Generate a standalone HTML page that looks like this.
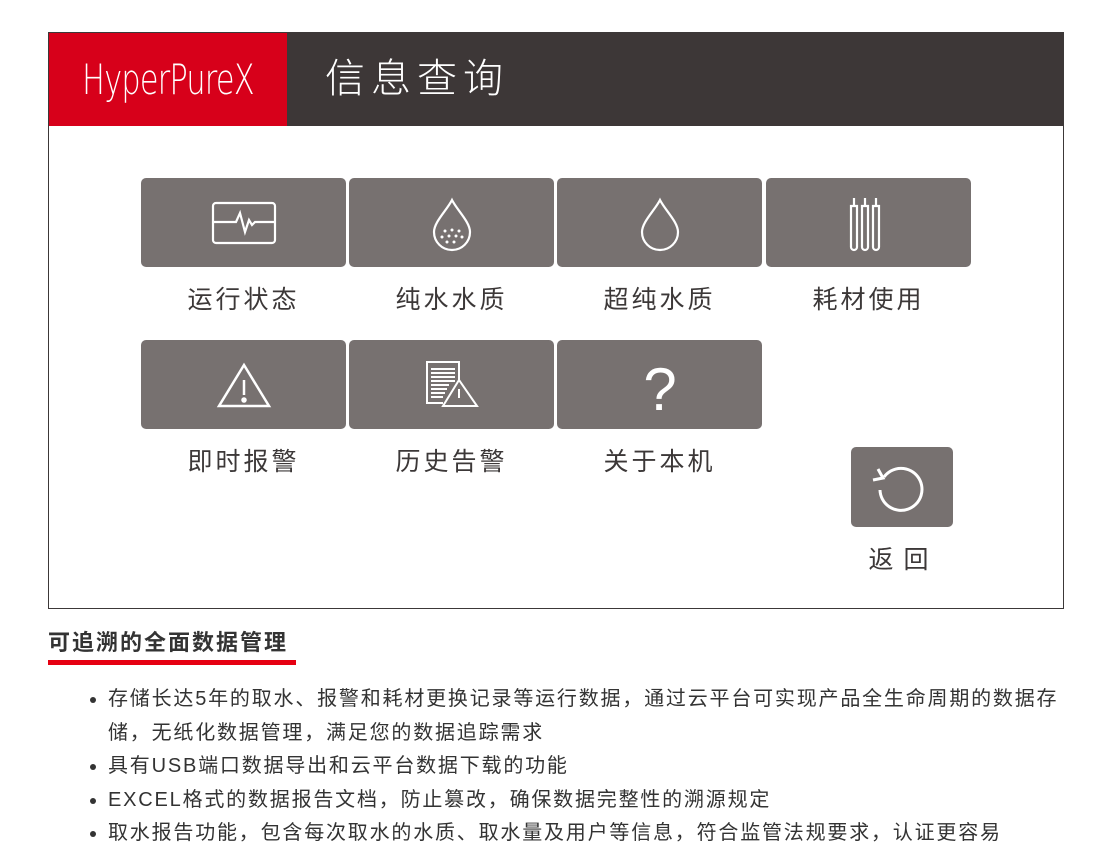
<!DOCTYPE html><html><head><meta charset="utf-8"><style>
body{margin:0;width:1111px;height:862px;background:#fff;font-family:"Liberation Sans","Noto Sans CJK SC",sans-serif;position:relative;overflow:hidden}
.frame{position:absolute;left:48px;top:32px;width:1014px;height:575px;border:1px solid #3c3838}
.hdr{position:absolute;left:0;top:0;width:1014px;height:93px;background:#3d3737}
.red{position:absolute;left:0;top:0;width:238px;height:93px;background:#d7001a;overflow:hidden}
.red span{position:absolute;left:119px;top:0;line-height:93px;color:#fff;font-size:42px;letter-spacing:-1px;transform:translateX(-50%) scaleX(.72);white-space:nowrap;font-family:"DejaVu Sans",sans-serif;font-weight:200}
.title{position:absolute;left:276px;top:0;line-height:93px;color:#fff;font-size:40px;letter-spacing:6px;font-weight:300}
.t{position:absolute;width:205px;height:89px;background:#777170;border-radius:5px}
.t svg{position:absolute;left:0;top:0}
.l{position:absolute;width:205px;text-align:center;font-size:25px;color:#3c3838;letter-spacing:3px}
h2{position:absolute;left:48px;top:625px;margin:0;font-size:22px;letter-spacing:2px;font-weight:bold;color:#333}
.ul{position:absolute;left:48px;top:660px;width:248px;height:5px;background:#e60012}
ul{position:absolute;left:68px;top:683px;margin:0;padding:0 0 0 40px;width:960px;font-size:20px;letter-spacing:1.8px;line-height:33.5px;color:#333}
</style></head><body>
<div class="frame">
<div class="hdr"><div class="red"><span>HyperPureX</span></div><div class="title">信息查询</div></div>
</div>
<div class="t" style="left:141px;top:178px"><svg width="205" height="89" fill="none" stroke="#fff" stroke-width="2.2"><rect x="72" y="25" width="62" height="40" rx="3"/><path d="M72 44H95l4-9 5 19 4-12 3 5 3-3h20"/></svg></div>
<div class="t" style="left:349px;top:178px"><svg width="205" height="89" fill="none" stroke="#fff" stroke-width="2.2"><path d="M103 22C98 32 85 44 85 54a18 18 0 0 0 36 0c0-10-13-22-18-32z"/><g fill="#fff" stroke="none"><circle cx="96" cy="53" r="1.5"/><circle cx="103" cy="52" r="1.5"/><circle cx="110" cy="53" r="1.5"/><circle cx="93" cy="59" r="1.5"/><circle cx="100" cy="58" r="1.5"/><circle cx="107" cy="58" r="1.5"/><circle cx="113" cy="59" r="1.5"/><circle cx="98" cy="64" r="1.5"/><circle cx="105" cy="64" r="1.5"/></g></svg></div>
<div class="t" style="left:557px;top:178px"><svg width="205" height="89" fill="none" stroke="#fff" stroke-width="2.2"><path d="M103 22C98 32 85 44 85 54a18 18 0 0 0 36 0c0-10-13-22-18-32z"/></svg></div>
<div class="t" style="left:766px;top:178px"><svg width="205" height="89" fill="none" stroke="#fff" stroke-width="2.2"><path d="M85 28v41a3 3 0 0 0 6 0V28zM96 28v41a3 3 0 0 0 6 0V28zM107 28v41a3 3 0 0 0 6 0V28zM88 28v-8M99 28v-8M110 28v-8"/></svg></div>
<div class="l" style="left:141px;top:280px">运行状态</div>
<div class="l" style="left:349px;top:280px">纯水水质</div>
<div class="l" style="left:557px;top:280px">超纯水质</div>
<div class="l" style="left:766px;top:280px">耗材使用</div>
<div class="t" style="left:141px;top:340px"><svg width="205" height="89" fill="none" stroke="#fff" stroke-width="2.5"><path d="M103 25L78 66h50z"/><path d="M103 40v15"/><circle cx="103" cy="60" r="1.5" fill="#fff"/></svg></div>
<div class="t" style="left:349px;top:340px"><svg width="205" height="89" fill="none" stroke="#fff" stroke-width="2"><path d="M94 63H78V22h32v20"/><path d="M82 29h24M82 33h24M82 37h24M82 41h24M82 45h18M82 49h16M82 53h14M82 57h12"/><path d="M110 40L94 66h34z"/><path d="M110 49v9"/></svg></div>
<div class="t" style="left:557px;top:340px"><svg width="205" height="89"><text x="103" y="70" text-anchor="middle" fill="#fff" font-size="60" font-family="Liberation Sans">?</text></svg></div>
<div class="l" style="left:141px;top:442px">即时报警</div>
<div class="l" style="left:349px;top:442px">历史告警</div>
<div class="l" style="left:557px;top:442px">关于本机</div>
<div class="t" style="left:851px;top:447px;width:102px;height:80px"><svg width="102" height="80" fill="none" stroke="#fff" stroke-width="3"><path d="M33 30a21 21 0 1 1-4 13"/><path d="M27 22l5 9-10 2"/></svg></div>
<div class="l" style="left:801px;top:540px;letter-spacing:10px">返回</div>
<h2>可追溯的全面数据管理</h2><div class="ul"></div>
<ul>
<li>存储长达5年的取水、报警和耗材更换记录等运行数据，通过云平台可实现产品全生命周期的数据存储，无纸化数据管理，满足您的数据追踪需求</li>
<li>具有USB端口数据导出和云平台数据下载的功能</li>
<li>EXCEL格式的数据报告文档，防止篡改，确保数据完整性的溯源规定</li>
<li>取水报告功能，包含每次取水的水质、取水量及用户等信息，符合监管法规要求，认证更容易</li>
</ul>
</body></html>
